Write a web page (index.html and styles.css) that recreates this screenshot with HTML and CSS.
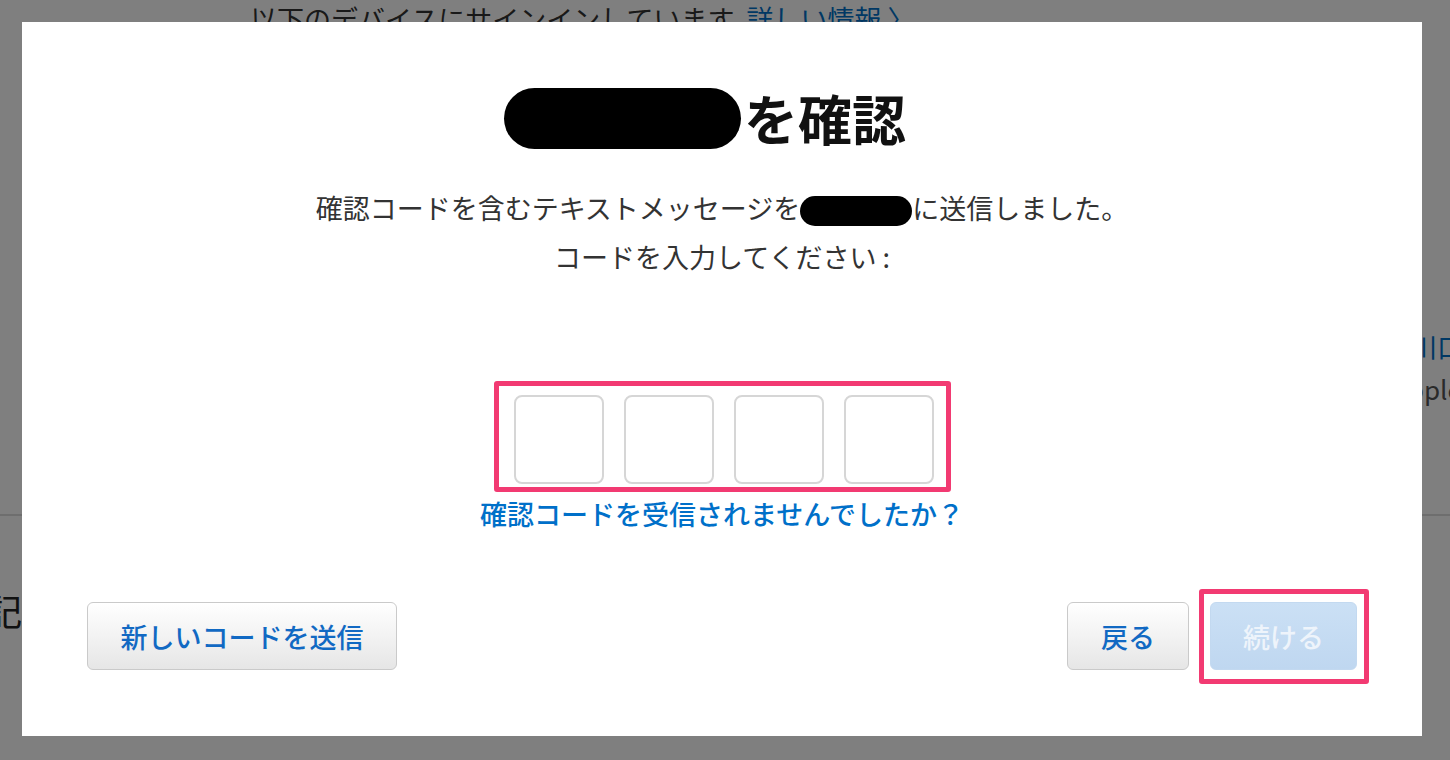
FILE: index.html
```html
<!DOCTYPE html>
<html lang="ja">

<head>
    <meta charset="UTF-8" />
    <meta name="viewport" content="width=device-width, initial-scale=1.0" />
    <title>確認</title>
    <link rel="stylesheet" href="styles.css">
</head>

<body>
    <div class="page">
        <p class="page-intro">以下のデバイスにサインインしています <a href="#">詳しい情報 〉</a></p>
        <div class="page-side">
            <a href="#" class="side-name">川口</a>
            <span class="side-sub">Apple ID</span>
        </div>
        <hr class="page-rule" />
        <p class="page-heading">記</p>
    </div>

    <div class="overlay">
        <div class="modal">
            <h1 class="modal-title"><span class="redact redact-title"></span>を確認</h1>
            <p class="modal-text">確認コードを含むテキストメッセージを<span class="redact redact-phone"></span>に送信しました。</p>
            <p class="modal-text">コードを入力してください :</p>

            <div class="code-group">
                <input class="code-digit" type="text" maxlength="1" />
                <input class="code-digit" type="text" maxlength="1" />
                <input class="code-digit" type="text" maxlength="1" />
                <input class="code-digit" type="text" maxlength="1" />
            </div>
            <a href="#" class="help-link">確認コードを受信されませんでしたか？</a>

            <div class="modal-actions">
                <button class="btn btn-resend">新しいコードを送信</button>
                <div class="actions-right">
                    <button class="btn btn-back">戻る</button>
                    <button class="btn btn-primary" disabled>続ける</button>
                </div>
            </div>
        </div>
    </div>
</body>

</html>
```

FILE: styles.css
```css
* {
    margin: 0;
    padding: 0;
    box-sizing: border-box;
}

body {
    font-family: "Noto Sans CJK JP", "Noto Sans", sans-serif;
    background-color: #fff;
    color: #333;
}

a {
    color: #0070c9;
    text-decoration: none;
}

/* page behind the dialog */
.page {
    height: 760px;
    overflow: hidden;
}

.page-intro {
    padding: 1px 0 0 250px;
    font-size: 27px;
    line-height: 36px;
}

.page-intro a {
    margin-left: 6px;
}

.page-side {
    display: flex;
    flex-direction: column;
    padding-left: 1410px;
    margin-top: 290px;
    white-space: nowrap;
}

.side-name {
    font-size: 27px;
    line-height: 40px;
}

.side-sub {
    margin-left: -18px;
    font-size: 26px;
    line-height: 44px;
    color: #555;
}

.page-rule {
    border: none;
    border-top: 2px solid #dcdcdc;
    margin-top: 103px;
}

.page-heading {
    margin: 72px 0 0 -14px;
    font-size: 36px;
    line-height: 44px;
    color: #222;
}

/* dialog */
.overlay {
    position: fixed;
    inset: 0;
    background-color: rgba(0, 0, 0, 0.5);
    padding: 22px;
}

.modal {
    width: 1400px;
    height: 714px;
    background-color: #fff;
    display: flex;
    flex-direction: column;
    align-items: center;
    padding: 65px 65px 66px;
}

.modal-title {
    font-size: 54px;
    line-height: 62px;
    font-weight: 700;
    color: #111;
    padding-right: 34px;
    display: flex;
    align-items: center;
}

.redact {
    display: inline-block;
    background-color: #000;
}

.redact-title {
    width: 237px;
    height: 61px;
    border-radius: 31px;
    margin-right: 3px;
}

.redact-phone {
    width: 112px;
    height: 30px;
    border-radius: 15px;
    vertical-align: -7px;
}

.modal-text {
    font-size: 27px;
    line-height: 49px;
    color: #333;
}

.modal-title + .modal-text {
    margin-top: 34px;
}

.code-group {
    margin-top: 100px;
    display: flex;
    gap: 20px;
    padding: 9px 12px 3px 15px;
    border: 5px solid #f23a72;
    border-radius: 3px;
}

.code-digit {
    width: 90px;
    height: 89px;
    border: 2px solid #d6d6d6;
    border-radius: 8px;
    font-size: 40px;
    text-align: center;
    outline: none;
}

.help-link {
    margin-top: 5px;
    font-size: 27px;
    line-height: 34px;
    font-weight: 500;
}

.modal-actions {
    margin-top: auto;
    width: 100%;
    display: flex;
    justify-content: space-between;
    align-items: center;
}

.actions-right {
    display: flex;
    gap: 21px;
}

.btn {
    height: 68px;
    padding: 0;
    font-family: inherit;
    font-size: 27px;
    font-weight: 500;
    color: #1169c3;
    background: linear-gradient(#ffffff, #e6e6e6);
    border: 1px solid #cacaca;
    border-radius: 6px;
    cursor: pointer;
}

.btn-resend {
    width: 310px;
}

.btn-back {
    width: 122px;
}

.btn-primary {
    position: relative;
    width: 147px;
    color: #eef4fb;
    background: linear-gradient(#cbe0f5, #bfd7f0);
    border-color: #c3d9f0;
    cursor: default;
}

.btn-primary::after {
    content: "";
    position: absolute;
    top: -14px;
    left: -12px;
    right: -13px;
    bottom: -15px;
    border: 5px solid #f23a72;
    border-radius: 3px;
}
```
